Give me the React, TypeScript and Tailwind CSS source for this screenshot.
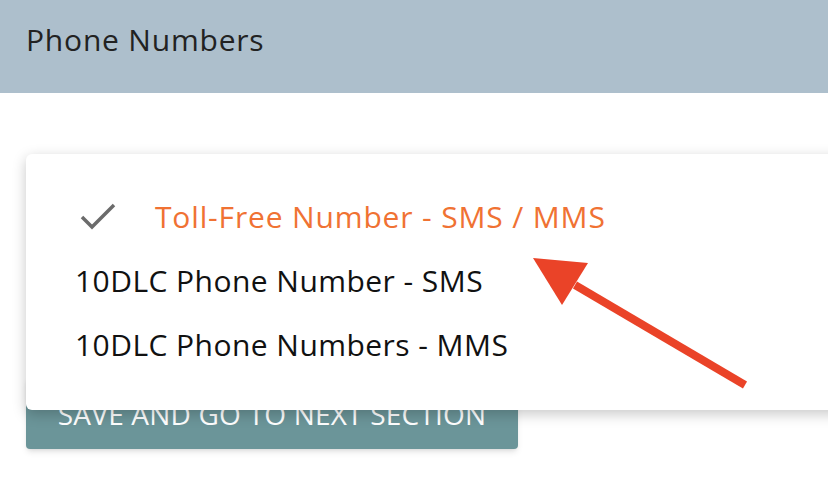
import React from 'react';

const items = [
  { label: 'Toll-Free Number - SMS / MMS', selected: true },
  { label: '10DLC Phone Number - SMS', selected: false },
  { label: '10DLC Phone Numbers - MMS', selected: false },
];

export default function App() {
  return (
    <div className="relative h-[484px] w-[828px] overflow-hidden bg-white font-['Open_Sans',sans-serif]">
      <div className="flex h-[93px] items-start bg-[#adbfcc] px-[26px] pt-[17px]">
        <span className="text-[30px] tracking-[0.8px] text-[#222]">Phone Numbers</span>
      </div>

      <div className="px-[26px] pt-[284px]">
        <button className="flex h-[72px] w-[492px] items-center justify-center rounded-[4px] bg-[#6b9599] pt-[2px] text-[28px] tracking-[0.2px] uppercase text-white shadow-md">
          Save and go to next section
        </button>
      </div>

      <div className="absolute left-[26px] top-[154px] h-[256px] w-[820px] rounded-[6px] bg-white py-[30px] shadow-[0_4px_14px_rgba(0,0,0,0.22)]">
        {items.map((it) => (
          <div key={it.label} className="flex h-[64px] items-center pl-[49px]">
            {it.selected && (
              <svg width="38" height="30" viewBox="0 0 38 30" className="ml-[4px] mr-[38px]">
                <path d="M3 16 L13 26 L35 4" fill="none" stroke="#6b6b6b" strokeWidth="3.5" />
              </svg>
            )}
            <span
              className={
                it.selected
                  ? 'text-[30px] tracking-[0.85px] text-[#f07233]'
                  : 'text-[30px] tracking-[0.45px] text-[#111]'
              }
            >
              {it.label}
            </span>
          </div>
        ))}
      </div>

      <svg className="absolute left-0 top-0" width="828" height="484" viewBox="0 0 828 484">
        <line x1="745" y1="385" x2="575" y2="285" stroke="#ea4328" strokeWidth="8" />
        <polygon points="533,258 588,263 562,305" fill="#ea4328" />
      </svg>
    </div>
  );
}
